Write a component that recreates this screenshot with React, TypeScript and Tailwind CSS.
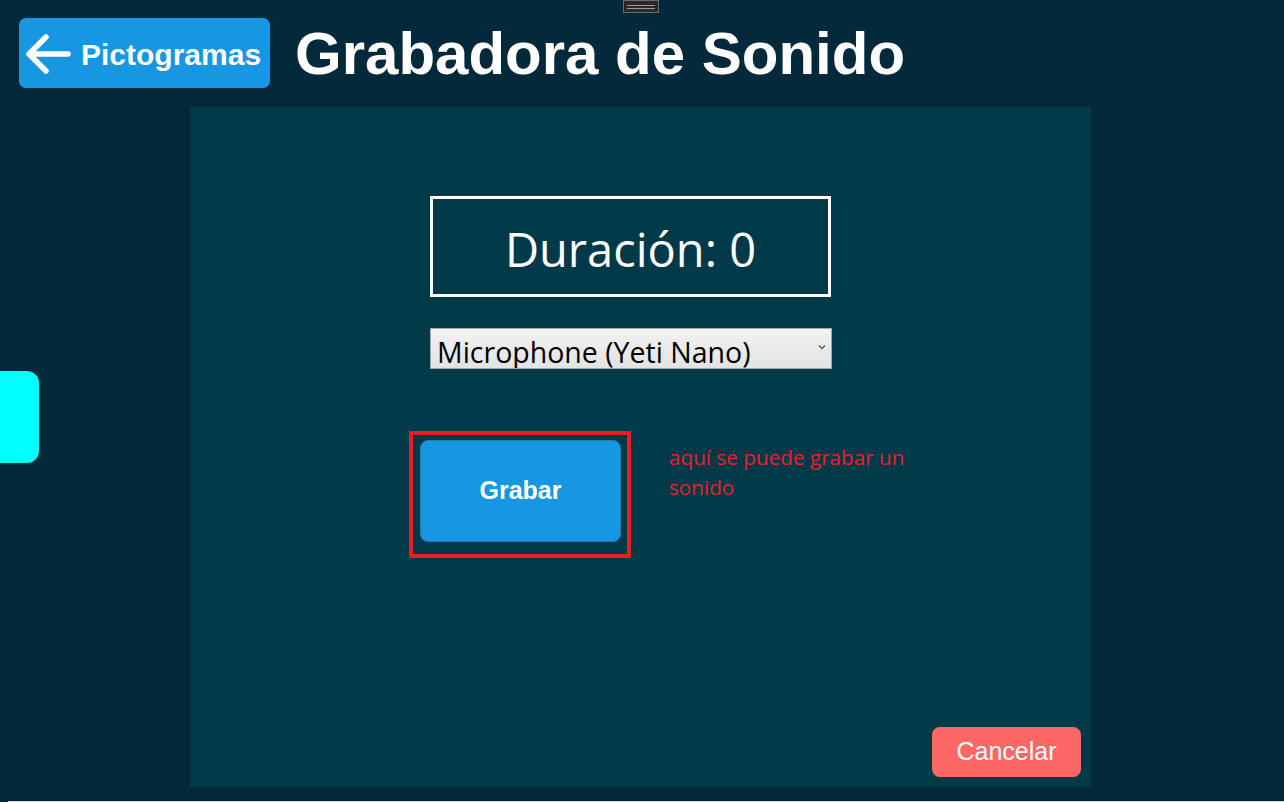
import React from "react";

const arial = { fontFamily: '"Liberation Sans", Arial, sans-serif' };
const segoe = { fontFamily: '"Open Sans", "Noto Sans", sans-serif' };

function ArrowLeft() {
  return (
    <svg width="46" height="42" viewBox="0 0 46 42" fill="none">
      <path
        d="M43 21H5M21 4L4 21L21 38"
        stroke="white"
        strokeWidth="5.5"
        strokeLinecap="round"
        strokeLinejoin="round"
      />
    </svg>
  );
}

export default function App() {
  return (
    <div className="relative w-[1284px] h-[802px] overflow-hidden bg-[#04293a]">
      {/* window handle at the top */}
      <div className="absolute left-[623px] top-0 w-[36px] h-[13px] bg-[#2a2a2a] border border-[#6a6a6a] flex flex-col items-center justify-center gap-[2px]">
        <div className="w-[28px] h-[1px] bg-[#9a9a9a]" />
        <div className="w-[28px] h-[1px] bg-[#9a9a9a]" />
      </div>

      {/* cyan side tab */}
      <div className="absolute left-0 top-[371px] w-[39px] h-[92px] bg-[#00ffff] rounded-r-[12px]" />

      {/* header */}
      <div className="flex items-center pl-[19px] pt-[18px]">
        <button
          className="flex items-center w-[251px] h-[70px] bg-[#1796e2] rounded-[7px] pl-[6px] pt-[2px] text-white font-bold text-[30px]"
          style={arial}
        >
          <ArrowLeft />
          <span className="ml-[10px]">Pictogramas</span>
        </button>
        <h1
          className="ml-[25px] mt-[2px] text-white font-bold text-[60px] leading-none"
          style={arial}
        >
          Grabadora de Sonido
        </h1>
      </div>

      {/* panel */}
      <div className="ml-[190px] mt-[19px] w-[901px] h-[680px] bg-[#003a49] flex flex-col">
        <div className="ml-[240px] mt-[89px] w-[401px] h-[101px] border-[3px] border-white flex items-center justify-center pt-[6px]">
          <span className="text-white text-[47px] leading-none" style={segoe}>
            Duración: 0
          </span>
        </div>

        <div className="ml-[240px] mt-[31px] w-[402px] h-[41px] border border-[#a5a5a5] bg-gradient-to-b from-[#f2f2f2] to-[#e3e3e3] relative overflow-hidden">
          <span
            className="absolute left-[6px] top-[9px] text-black text-[28.5px] leading-none whitespace-nowrap"
            style={segoe}
          >
            Microphone (Yeti Nano)
          </span>
          <svg className="absolute right-[5px] top-[15px]" width="8" height="6" viewBox="0 0 8 6">
            <path d="M1 1.5L4 4.5L7 1.5" stroke="#555" strokeWidth="1.3" fill="none" />
          </svg>
        </div>

        <div className="flex items-start ml-[219px] mt-[62px]">
          <div className="w-[222px] h-[127px] border-4 border-[#ed1c24] pt-[5px] pl-[7px]">
            <button
              className="w-[201px] h-[102px] bg-[#1796e2] border border-[#1a7fbd] rounded-[8px] text-white font-bold text-[25px]"
              style={arial}
            >
              Grabar
            </button>
          </div>
          <p
            className="ml-[38px] mt-[11px] w-[260px] text-[#e8202a] text-[20.7px] leading-[30px]"
            style={segoe}
          >
            aquí se puede grabar un sonido
          </p>
        </div>

        <div className="mt-auto flex justify-end pr-[10px] pb-[10px]">
          <button
            className="w-[149px] h-[50px] bg-[#ff6666] rounded-[8px] text-white text-[25px]"
            style={arial}
          >
            Cancelar
          </button>
        </div>
      </div>

      {/* bottom edge line */}
      <div className="absolute left-[8px] right-0 bottom-0 h-[1px] bg-[#c9d3dc]" />
    </div>
  );
}
